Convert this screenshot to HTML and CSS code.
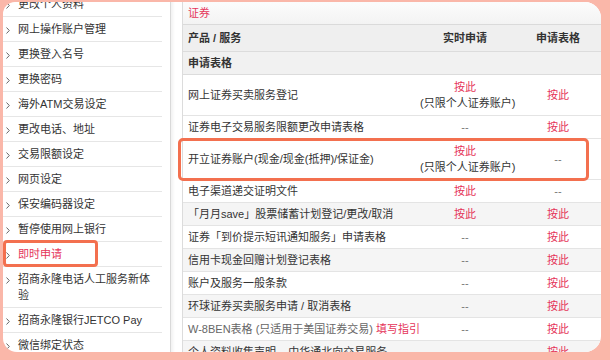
FILE: index.html
```html
<!DOCTYPE html>
<html lang="zh-CN">
<head>
    <meta charset="UTF-8">
    <meta name="viewport" content="width=device-width, initial-scale=1.0">
    <title>即时申请</title>
    <link rel="stylesheet" href="styles.css">
</head>
<body>

<div class="frame">
    <ul class="side-menu">
        <li class="menu-item"><span class="chev"></span>更改个人资料</li>
        <li class="menu-item"><span class="chev"></span>网上操作账户管理</li>
        <li class="menu-item"><span class="chev"></span>更换登入名号</li>
        <li class="menu-item"><span class="chev"></span>更换密码</li>
        <li class="menu-item"><span class="chev"></span>海外ATM交易设定</li>
        <li class="menu-item"><span class="chev"></span>更改电话、地址</li>
        <li class="menu-item"><span class="chev"></span>交易限额设定</li>
        <li class="menu-item"><span class="chev"></span>网页设定</li>
        <li class="menu-item"><span class="chev"></span>保安编码器设定</li>
        <li class="menu-item"><span class="chev"></span>暂停使用网上银行</li>
        <li class="menu-item active"><span class="chev"></span>即时申请<span class="mark"></span></li>
        <li class="menu-item"><span class="chev"></span>招商永隆电话人工服务新体验</li>
        <li class="menu-item"><span class="chev"></span>招商永隆银行JETCO Pay</li>
        <li class="menu-item"><span class="chev"></span>微信绑定状态</li>
    </ul>

    <div class="main">
        <div class="title-bar">证券</div>
        <table class="services">
            <colgroup>
                <col class="col-name">
                <col class="col-online">
                <col class="col-form">
            </colgroup>
            <tr class="head">
                <th class="name">产品 / 服务</th>
                <th>实时申请</th>
                <th>申请表格</th>
            </tr>
            <tr class="section">
                <th class="name" colspan="3">申请表格</th>
            </tr>
            <tr class="tall">
                <td class="name">网上证券买卖服务登记</td>
                <td><a class="link">按此</a><span class="note">(只限个人证券账户)</span></td>
                <td><a class="link">按此</a></td>
            </tr>
            <tr>
                <td class="name">证券电子交易服务限额更改申请表格</td>
                <td class="none">--</td>
                <td><a class="link">按此</a></td>
            </tr>
            <tr class="tall">
                <td class="name">开立证券账户(现金/现金(抵押)/保证金)</td>
                <td><a class="link">按此</a><span class="note">(只限个人证券账户)</span></td>
                <td class="none">--</td>
            </tr>
            <tr>
                <td class="name">电子渠道递交证明文件</td>
                <td><a class="link">按此</a></td>
                <td class="none">--</td>
            </tr>
            <tr class="odd">
                <td class="name">「月月save」股票储蓄计划登记/更改/取消</td>
                <td><a class="link">按此</a></td>
                <td><a class="link">按此</a></td>
            </tr>
            <tr>
                <td class="name">证券「到价提示短讯通知服务」申请表格</td>
                <td class="none">--</td>
                <td><a class="link">按此</a></td>
            </tr>
            <tr class="odd">
                <td class="name">信用卡现金回赠计划登记表格</td>
                <td class="none">--</td>
                <td><a class="link">按此</a></td>
            </tr>
            <tr>
                <td class="name">账户及服务一般条款</td>
                <td class="none">--</td>
                <td><a class="link">按此</a></td>
            </tr>
            <tr class="odd">
                <td class="name">环球证券买卖服务申请 / 取消表格</td>
                <td class="none">--</td>
                <td><a class="link">按此</a></td>
            </tr>
            <tr>
                <td class="name muted">W-8BEN表格 (只适用于美国证券交易) <a class="link">填写指引</a></td>
                <td class="none">--</td>
                <td><a class="link">按此</a></td>
            </tr>
            <tr class="odd">
                <td class="name">个人资料收集声明 – 中华通北向交易服务</td>
                <td class="none">--</td>
                <td><a class="link">按此</a></td>
            </tr>
        </table>
        <div class="row-mark"></div>
    </div>
</div>

</body>
</html>
```

FILE: styles.css
```css
body {
    margin: 0;
    height: 360px;
    overflow: hidden;
    background-color: #fab7a9;
    font-family: "Liberation Sans", "Noto Sans CJK SC", sans-serif;
    font-size: 11px;
    color: #333;
}

.frame {
    display: flex;
    height: 350px;
    margin: 2px 9px 0 3px;
    background: #fff;
    border-radius: 12px 16px 16px 14px;
    overflow: hidden;
}

/* left menu */

.side-menu {
    flex: 0 0 159px;
    list-style: none;
    margin: -10px 8px 0 0;
    padding: 0;
    box-shadow: 8px 0 0 #fff, 9px 0 0 #d9d9d9, 11px 0 3px rgba(0, 0, 0, 0.06);
    height: 370px;
}

.menu-item {
    position: relative;
    display: flex;
    align-items: flex-start;
    padding: 4px 8px 4px 0;
    line-height: 16px;
    border-bottom: 1px solid #e6e6e6;
    color: #333;
}

.chev {
    flex: 0 0 15px;
    height: 16px;
    background: no-repeat 3px 6px / 4px 7px url("data:image/svg+xml,%3Csvg xmlns='http://www.w3.org/2000/svg' viewBox='0 0 4 7'%3E%3Cpath d='M0.5 0.5 L3.3 3.5 L0.5 6.5' fill='none' stroke='%23666' stroke-width='1'/%3E%3C/svg%3E");
}

.menu-item.active {
    color: #e5355a;
}

.mark {
    position: absolute;
    left: 0;
    top: -2px;
    width: 95px;
    height: 27px;
    box-sizing: border-box;
    border: 3px solid #f3704f;
    border-radius: 4px;
}

/* main panel */

.main {
    position: relative;
    flex: 1;
    margin-left: 12px;
    border-left: 1px solid #dcdcdc;
}

.title-bar {
    height: 22px;
    line-height: 22px;
    padding-left: 5px;
    background: linear-gradient(#fcfcfc, #f3f3f3);
    border-bottom: 1px solid #dadada;
    color: #e5355a;
}

.services {
    width: 100%;
    border-collapse: collapse;
    table-layout: fixed;
}

.col-name { width: 232px; }
.col-online { width: 100px; }

.services th,
.services td {
    padding: 4px 5px;
    line-height: 14px;
    text-align: center;
    border-bottom: 1px solid #e4e4e4;
    white-space: nowrap;
}

.services .name {
    text-align: left;
}

.head th {
    height: 18px;
    background: #efefef;
    font-weight: bold;
    color: #333;
    border-bottom-color: #dcdcdc;
}

.section th {
    height: 14px;
    background: #f1f1f1;
    font-weight: bold;
    border-bottom-color: #dcdcdc;
}

.tall td {
    line-height: 16px;
}

.odd td {
    background: #f5f5f5;
}

.link {
    color: #e5355a;
}

.note {
    display: block;
    color: #333;
}

.none {
    color: #777;
}

.muted {
    color: #666;
}

.row-mark {
    position: absolute;
    left: -5px;
    top: 136px;
    width: 411px;
    height: 43px;
    box-sizing: border-box;
    border: 3px solid #f3704f;
    border-radius: 5px;
}
```
